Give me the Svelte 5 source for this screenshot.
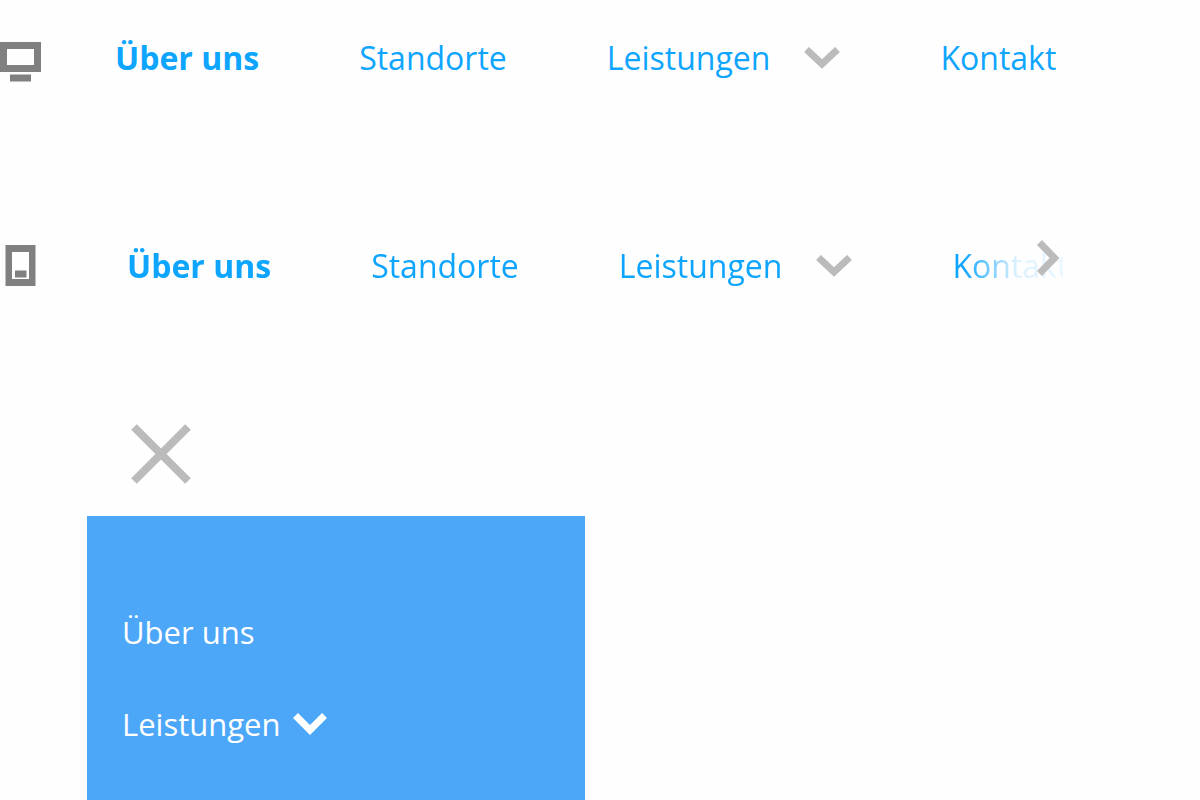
<script>
  const items = [
    { label: 'Über uns', current: true },
    { label: 'Standorte' },
    { label: 'Leistungen', sub: true },
    { label: 'Kontakt' }
  ];
</script>

{#snippet links()}
  {#each items as item}
    <li>
      <a href="#top" class:current={item.current}>{item.label}</a>
      {#if item.sub}
        <button aria-label="Untermenü Leistungen">
          <svg width="36" height="22" viewBox="0 0 36 22"><path d="M2.500 2.500 18 17 33.500 2.500" /></svg>
        </button>
      {/if}
    </li>
  {/each}
{/snippet}

<main>
  <section class="row">
    <svg class="device desktop" width="41" height="40" viewBox="0 0 41 40" aria-hidden="true">
      <path fill-rule="evenodd" d="M0 0H41V30H0ZM7 7V23H34V7Z" />
      <path d="M10 32.500H31V39.500H10Z" />
    </svg>
    <nav aria-label="Desktop"><ul>{@render links()}</ul></nav>
  </section>

  <section class="row mobile">
    <svg class="device" width="41" height="41" viewBox="0 0 41 41" aria-hidden="true">
      <path fill-rule="evenodd" d="M5.500 0H35.500V41H5.500ZM12 7V34H29V7Z" />
      <path d="M15 25.500H26.500V32.500H15Z" />
    </svg>
    <nav class="scroller" aria-label="Mobil">
      <ul>{@render links()}</ul>
      <button class="next" aria-label="Weiter">
        <svg width="22" height="36" viewBox="0 0 22 36"><path d="M2.500 2.500 17.500 18 2.500 33.500" /></svg>
      </button>
    </nav>
  </section>

  <section class="drawer">
    <button class="close" aria-label="Menü schließen">
      <svg width="60" height="60" viewBox="0 0 60 60"><path d="M3 3 57 57M57 3 3 57" /></svg>
    </button>
    <nav class="panel" aria-label="Menü">
      <a href="#top">Über uns</a>
      <div class="entry">
        <a href="#top">Leistungen</a>
        <button aria-label="Untermenü öffnen">
          <svg width="34" height="22" viewBox="0 0 34 22"><path d="M2.500 2.500 17 17 31.500 2.500" /></svg>
        </button>
      </div>
    </nav>
  </section>
</main>

<style>
  :global(body) {
    background: #fefefe;
  }
  main {
    display: flex;
    flex-direction: column;
    min-height: 100vh;
    box-sizing: border-box;
    padding-top: 34px;
    overflow: hidden;
    font-family: "Open Sans", "Noto Sans", sans-serif;
    font-size: 32px;
    line-height: 48px;
    color: #0ea5ff;
  }
  a {
    color: inherit;
    text-decoration: none;
    white-space: nowrap;
  }
  button {
    display: block;
    padding: 0;
    border: 0;
    background: none;
    cursor: pointer;
  }
  svg {
    display: block;
    flex: none;
  }
  button path {
    fill: none;
    stroke: #bbb;
    stroke-width: 7;
  }
  .row {
    display: flex;
    align-items: flex-start;
    gap: 74px;
  }
  .device {
    fill: #808080;
    margin-top: 3px;
  }
  .desktop {
    margin-top: 8px;
  }
  .mobile {
    margin-top: 160px;
    gap: 86px;
  }
  ul {
    display: flex;
    gap: 100px;
    margin: 0;
    padding: 0;
    list-style: none;
  }
  li {
    display: flex;
    align-items: center;
    gap: 34px;
  }
  .current {
    font-weight: 700;
  }
  .scroller {
    position: relative;
    width: 936px;
  }
  .scroller ul {
    overflow: hidden;
    -webkit-mask-image: linear-gradient(to right, #000 835px, rgba(0, 0, 0, 0.14) 890px, rgba(0, 0, 0, 0.08) 936px);
    mask-image: linear-gradient(to right, #000 835px, rgba(0, 0, 0, 0.14) 890px, rgba(0, 0, 0, 0.08) 936px);
  }
  .next {
    position: absolute;
    right: 4px;
    top: -2px;
  }
  .drawer {
    display: flex;
    flex: 1;
    flex-direction: column;
    width: 498px;
    max-width: 100%;
    margin: 134px 0 0 87px;
  }
  .close {
    align-self: flex-start;
    margin-left: 44px;
  }
  .close path {
    stroke-width: 8;
  }
  .panel {
    display: flex;
    flex: 1;
    flex-direction: column;
    align-items: flex-start;
    gap: 44px;
    box-sizing: border-box;
    margin-top: 32px;
    padding: 92px 35px 50px;
    background: #4da7f8;
    color: #fff;
    font-size: 31px;
  }
  .entry {
    display: flex;
    align-items: center;
    gap: 12px;
  }
  .entry path {
    stroke: #fff;
  }
</style>
